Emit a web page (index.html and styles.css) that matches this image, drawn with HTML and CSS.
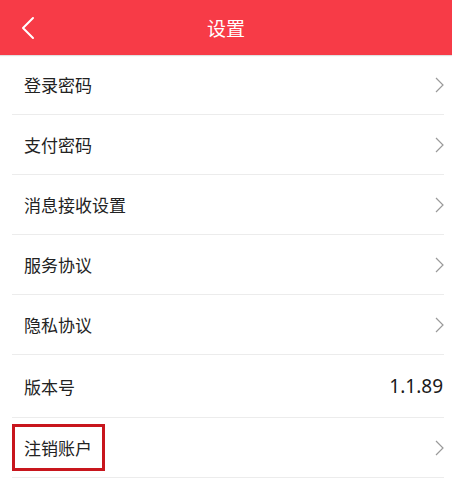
FILE: index.html
```html
<!DOCTYPE html>
<html lang="zh-CN">
<head>
<meta charset="utf-8">
<title>设置</title>
<link rel="stylesheet" href="styles.css">
</head>
<body>
<div class="page">
  <header class="topbar">
    <span class="back">
      <svg width="14" height="24" viewBox="0 0 14 24"><path d="M12 2 L2 12 L12 22" fill="none" stroke="#fff" stroke-width="2" stroke-linecap="round" stroke-linejoin="round"/></svg>
    </span>
    <h1 class="title">设置</h1>
  </header>
  <ul class="list">
    <li class="item"><span class="label">登录密码</span><svg class="arrow" width="9" height="16" viewBox="0 0 9 16"><path d="M1 1 L8 8 L1 15" fill="none" stroke="#9a9a9a" stroke-width="1.2"/></svg></li>
    <li class="item"><span class="label">支付密码</span><svg class="arrow" width="9" height="16" viewBox="0 0 9 16"><path d="M1 1 L8 8 L1 15" fill="none" stroke="#9a9a9a" stroke-width="1.2"/></svg></li>
    <li class="item"><span class="label">消息接收设置</span><svg class="arrow" width="9" height="16" viewBox="0 0 9 16"><path d="M1 1 L8 8 L1 15" fill="none" stroke="#9a9a9a" stroke-width="1.2"/></svg></li>
    <li class="item"><span class="label">服务协议</span><svg class="arrow" width="9" height="16" viewBox="0 0 9 16"><path d="M1 1 L8 8 L1 15" fill="none" stroke="#9a9a9a" stroke-width="1.2"/></svg></li>
    <li class="item"><span class="label">隐私协议</span><svg class="arrow" width="9" height="16" viewBox="0 0 9 16"><path d="M1 1 L8 8 L1 15" fill="none" stroke="#9a9a9a" stroke-width="1.2"/></svg></li>
    <li class="item item-version"><span class="label">版本号</span><span class="value">1.1.89</span></li>
    <li class="item item-cancel"><span class="label">注销账户</span><svg class="arrow" width="9" height="16" viewBox="0 0 9 16"><path d="M1 1 L8 8 L1 15" fill="none" stroke="#9a9a9a" stroke-width="1.2"/></svg><span class="highlight"></span></li>
  </ul>
</div>
</body>
</html>
```
FILE: styles.css
```css
html, body {
  margin: 0;
  padding: 0;
  background: #fff;
}
body {
  font-family: "Noto Sans CJK SC", "Noto Sans", sans-serif;
  width: 452px;
  height: 482px;
  overflow: hidden;
}
.topbar {
  height: 55px;
  background: #f73b47;
  display: flex;
  align-items: center;
  justify-content: center;
  position: relative;
  box-shadow: 0 1px 1px rgba(0,0,0,0.12);
}
.back {
  position: absolute;
  left: 21px;
  top: 16px;
  width: 14px;
  height: 24px;
  display: block;
}
.back svg { display: block; }
.title {
  margin: 0;
  color: #fff;
  font-size: 19px;
  font-weight: normal;
  line-height: 1;
}
.list {
  list-style: none;
  margin: 0;
  padding: 0 8px 0 12px;
}
.item {
  height: 59px;
  border-bottom: 1px solid #ececec;
  display: flex;
  align-items: center;
  justify-content: space-between;
  padding: 0 0 0 12px;
  position: relative;
}
.label {
  font-size: 17px;
  color: #222;
}
.arrow {
  display: block;
}
.item-version {
  height: 62px;
}
.value {
  font-family: "Noto Sans", sans-serif;
  font-size: 19px;
  color: #1a1a1a;
  margin-right: 1px;
}
.highlight {
  position: absolute;
  left: 0;
  top: 6px;
  width: 93px;
  height: 47px;
  border: 3px solid #c8161d;
  box-sizing: border-box;
}
```
